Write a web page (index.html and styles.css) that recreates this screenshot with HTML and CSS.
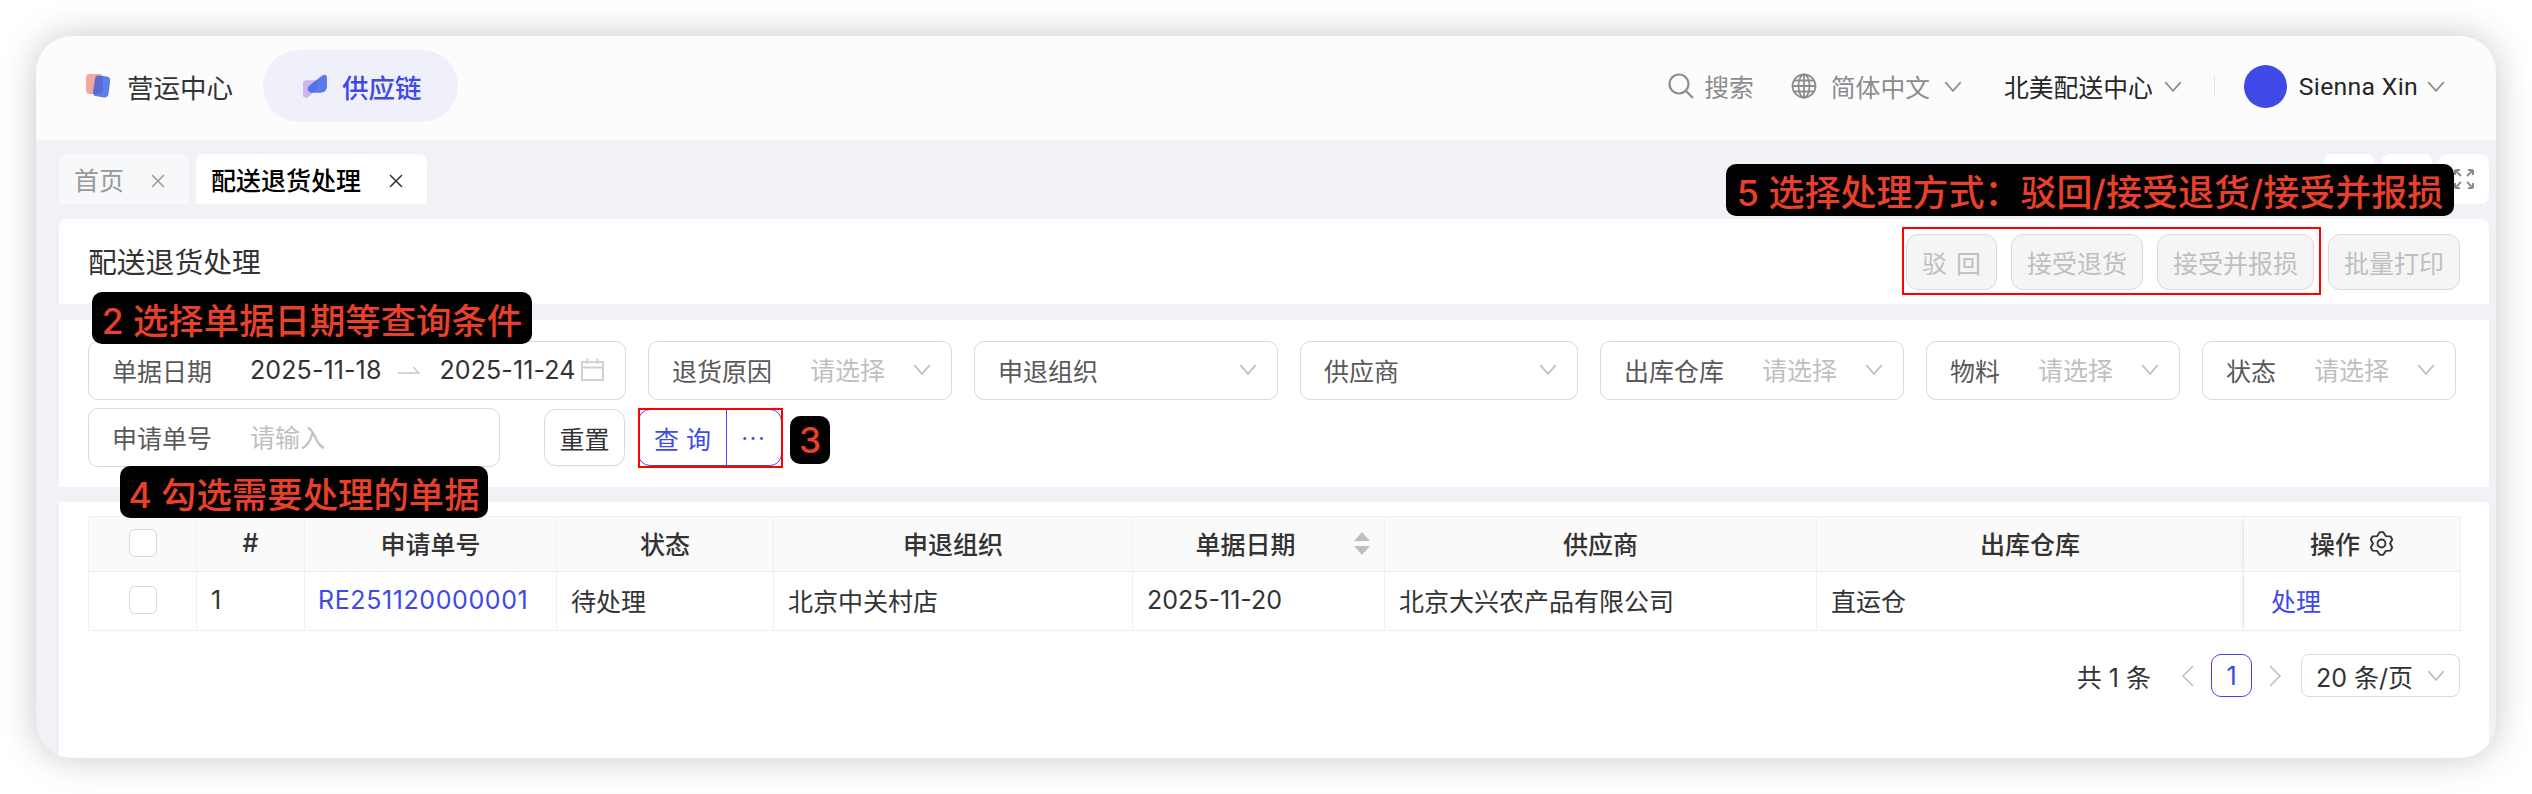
FILE: index.html
```html
<!DOCTYPE html>
<html lang="zh-CN">
<head>
  <meta charset="UTF-8">
  <title>配送退货处理</title>
  <link rel="stylesheet" href="styles.css">
</head>
<body>
  <div class="window">
    <header class="topbar">
      <nav class="apps">
        <a class="app">
          <svg class="app-logo" viewBox="0 0 24 25"><rect width="17" height="20" rx="4" fill="#f4a79d"/><rect x="8" y="2" width="15.5" height="21" rx="4" transform="rotate(8 16 12)" fill="#2f5be6" opacity="0.78"/></svg>
          <span>营运中心</span>
        </a>
        <a class="app app-active">
          <svg class="app-logo" viewBox="0 0 25 25"><path d="M3 6H15V15L5 24Q0 25 0 22V9Q0 6 3 6Z" fill="#cdb6f0"/><path d="M6 12L20 1Q25 -1 25 3V12Q25 19 18 19H8Q3 17 6 12Z" fill="#3b62e6" opacity="0.82"/></svg>
          <span>供应链</span>
        </a>
      </nav>
      <div class="tools">
        <a class="tool tool-search">
          <svg class="tool-icon" viewBox="0 0 26 26" fill="none" stroke="#8c8c8c" stroke-width="2.2"><circle cx="11" cy="11" r="9.5"/><path d="M18 18L25 25"/></svg>
          <span>搜索</span>
        </a>
        <a class="tool tool-lang">
          <svg class="tool-icon" viewBox="0 0 26 26" fill="none" stroke="#8c8c8c" stroke-width="1.8"><circle cx="13" cy="13" r="11.5"/><ellipse cx="13" cy="13" rx="5.5" ry="11.5"/><path d="M13 1.5V24.5M1.5 13H24.5M3 7.5H23M3 18.500H23"/></svg>
          <span>简体中文</span>
          <svg class="chev chev-grey" viewBox="0 0 16 10"><path d="M1 1L8 9L15 1"/></svg>
        </a>
        <a class="tool tool-org">
          <span>北美配送中心</span>
          <svg class="chev chev-grey" viewBox="0 0 16 10"><path d="M1 1L8 9L15 1"/></svg>
        </a>
        <span class="tool-sep"></span>
        <a class="tool tool-user">
          <span class="avatar"></span>
          <span>Sienna Xin</span>
          <svg class="chev chev-grey" viewBox="0 0 16 10"><path d="M1 1L8 9L15 1"/></svg>
        </a>
      </div>
    </header>

    <main class="main">
      <div class="tabbar">
        <div class="tab">
          <span>首页</span>
          <svg class="tab-close" viewBox="0 0 14 14"><path d="M1 1L13 13M13 1L1 13"/></svg>
        </div>
        <div class="tab tab-active">
          <span>配送退货处理</span>
          <svg class="tab-close" viewBox="0 0 14 14"><path d="M1 1L13 13M13 1L1 13"/></svg>
        </div>
        <div class="tab-tools">
          <span class="tab-btn"></span>
          <span class="tab-btn"></span>
          <span class="tab-btn">
            <svg class="full-icon" viewBox="0 0 22 22"><path d="M2 2L8 8M2 2V7M2 2H7M20 2L14 8M20 2V7M20 2H15M2 20L8 14M2 20V15M2 20H7M20 20L14 14M20 20V15M20 20H15"/></svg>
          </span>
        </div>
      </div>

      <section class="card page-head">
        <h1 class="page-title">配送退货处理</h1>
        <div class="head-actions">
          <button class="btn-off">驳 回</button>
          <button class="btn-off">接受退货</button>
          <button class="btn-off">接受并报损</button>
          <button class="btn-off">批量打印</button>
        </div>
      </section>

      <section class="card filters">
        <div class="field w-date">
          <span class="field-label">单据日期</span>
          <span class="date">2025-11-18</span>
          <svg class="range-arrow" viewBox="0 0 22 9"><path d="M0 8H21L15 2"/></svg>
          <span class="date">2025-11-24</span>
          <svg class="cal-icon" viewBox="0 0 23 23"><path d="M1 4H22V22H1ZM1 9.500H22M6.500 0.500V6M16.500 0.500V6"/></svg>
        </div>
        <div class="field w-long">
          <span class="field-label">退货原因</span>
          <span class="placeholder">请选择</span>
          <svg class="chev" viewBox="0 0 16 10"><path d="M1 1L8 9L15 1"/></svg>
        </div>
        <div class="field w-long">
          <span class="field-label">申退组织</span>
          <svg class="chev" viewBox="0 0 16 10"><path d="M1 1L8 9L15 1"/></svg>
        </div>
        <div class="field w-mid">
          <span class="field-label">供应商</span>
          <svg class="chev" viewBox="0 0 16 10"><path d="M1 1L8 9L15 1"/></svg>
        </div>
        <div class="field w-long">
          <span class="field-label">出库仓库</span>
          <span class="placeholder">请选择</span>
          <svg class="chev" viewBox="0 0 16 10"><path d="M1 1L8 9L15 1"/></svg>
        </div>
        <div class="field w-short">
          <span class="field-label">物料</span>
          <span class="placeholder">请选择</span>
          <svg class="chev" viewBox="0 0 16 10"><path d="M1 1L8 9L15 1"/></svg>
        </div>
        <div class="field w-short">
          <span class="field-label">状态</span>
          <span class="placeholder">请选择</span>
          <svg class="chev" viewBox="0 0 16 10"><path d="M1 1L8 9L15 1"/></svg>
        </div>
        <div class="field w-input">
          <span class="field-label">申请单号</span>
          <span class="placeholder">请输入</span>
        </div>
        <div class="query-actions">
          <button class="btn-reset">重置</button>
          <div class="btn-query">
            <span class="btn-query-main">查 询</span>
            <span class="btn-query-more">···</span>
          </div>
        </div>
      </section>

      <section class="card results">
        <table class="grid">
          <colgroup>
            <col class="c-check"><col class="c-no"><col class="c-code"><col class="c-status"><col class="c-org"><col class="c-date"><col class="c-supplier"><col class="c-store"><col class="c-op">
          </colgroup>
          <thead>
            <tr>
              <th><span class="check"></span></th>
              <th>#</th>
              <th>申请单号</th>
              <th>状态</th>
              <th>申退组织</th>
              <th>
                <div class="sort-head">
                  <span>单据日期</span>
                  <svg class="sorter" viewBox="0 0 16 23"><path d="M8 0L16 9H0Z"/><path d="M0 14H16L8 23Z"/></svg>
                </div>
              </th>
              <th>供应商</th>
              <th>出库仓库</th>
              <th class="op-cell">
                <div class="op-head">
                  <span>操作</span>
                  <svg class="gear" viewBox="0 0 24 24"><path d="M10.300 1.100H13.700L16.100 4.900L20.550 5.100L22.270 8.100L20.200 12L22.270 15.900L20.550 18.900L16.100 19.100L13.700 22.900H10.300L7.900 19.100L3.450 18.900L1.730 15.900L3.800 12L1.730 8.100L3.450 5.100L7.900 4.900Z"/><circle cx="12" cy="12" r="3.800"/></svg>
                </div>
              </th>
            </tr>
          </thead>
          <tbody>
            <tr>
              <td class="center"><span class="check"></span></td>
              <td>1</td>
              <td><a class="link link-code">RE251120000001</a></td>
              <td>待处理</td>
              <td>北京中关村店</td>
              <td>2025-11-20</td>
              <td>北京大兴农产品有限公司</td>
              <td>直运仓</td>
              <td class="op-cell op-body"><a class="link">处理</a></td>
            </tr>
          </tbody>
        </table>
        <div class="pager">
          <span class="pager-total">共 1 条</span>
          <svg class="pager-arrow" viewBox="0 0 13 22"><path d="M12 1L2 11L12 21"/></svg>
          <span class="pager-num">1</span>
          <svg class="pager-arrow" viewBox="0 0 13 22"><path d="M1 1L11 11L1 21"/></svg>
          <div class="pager-size">
            <span>20 条/页</span>
            <svg class="chev" viewBox="0 0 16 10"><path d="M1 1L8 9L15 1"/></svg>
          </div>
        </div>
      </section>
    </main>

    <!-- 标注层 -->
    <div class="mark mark-actions"></div>
    <div class="mark mark-query"></div>
    <div class="note note-2">2 选择单据日期等查询条件</div>
    <div class="note note-3">3</div>
    <div class="note note-4">4 勾选需要处理的单据</div>
    <div class="note note-5">5 选择处理方式：驳回/接受退货/接受并报损</div>
  </div>
</body>
</html>
```

FILE: styles.css
```css
* {
  box-sizing: border-box;
}
body {
  margin: 0;
  height: 794px;
  padding: 36px 36px 36px 36px;
  background-color: #fff;
  font-family: Inter, "Noto Sans CJK SC", sans-serif;
  font-size: 25px;
  color: #333;
  overflow: hidden;
}
svg {
  display: block;
  flex: none;
}
button {
  font: inherit;
}

.window {
  position: relative;
  width: 2460px;
  height: 722px;
  border-radius: 36px;
  background-color: #f1f2f6;
  box-shadow: 0 0 36px rgba(0, 0, 0, 0.22);
  overflow: hidden;
  display: flex;
  flex-direction: column;
}

/* 顶部导航 */
.topbar {
  flex: none;
  height: 104px;
  padding: 14px 0 18px 50px;
  background-color: #fcfcfd;
  display: flex;
  justify-content: space-between;
  align-items: center;
}
.apps {
  display: flex;
  align-items: center;
  gap: 30px;
}
.app {
  display: flex;
  align-items: center;
  gap: 17px;
  font-size: 26.500px;
  color: #333;
}
.app-logo {
  width: 24px;
  height: 25px;
}
.app-active {
  height: 72px;
  width: 195px;
  padding-left: 40px;
  gap: 15px;
  border-radius: 36px;
  background-color: #f0f0fb;
  color: #4049e8;
  font-weight: 500;
}
.tools {
  display: flex;
  align-items: center;
  padding-right: 51px;
  font-size: 24.800px;
  color: #8c8c8c;
}
.tool {
  display: flex;
  align-items: center;
}
.tool-icon {
  width: 26px;
  height: 26px;
}
.tool-search {
  gap: 10px;
  margin-right: 37px;
}
.tool-lang {
  gap: 14px;
  margin-right: 42px;
}
.tool-org {
  gap: 11px;
  color: #262626;
}
.tool-sep {
  width: 1px;
  height: 22px;
  margin: 0 29px 0 32px;
  background-color: #e4e4e7;
}
.tool-user {
  font-family: Roboto, "Noto Sans CJK SC", sans-serif;
  color: #262626;
  letter-spacing: 0.3px;
}
.avatar {
  width: 43px;
  height: 43px;
  margin-right: 12px;
  border-radius: 50%;
  background-color: #4049e8;
}
.tool-user .chev {
  margin-left: 9px;
}

.chev {
  width: 18px;
  height: 11px;
  fill: none;
  stroke: #bfbfbf;
  stroke-width: 1.500;
}
.chev-grey {
  stroke: #8c8c8c;
}

/* 主体 */
.main {
  flex: 1;
  min-height: 0;
  padding: 14px 7px 0 23px;
  display: flex;
  flex-direction: column;
  gap: 15px;
}
.tabbar {
  flex: none;
  height: 50px;
  display: flex;
  gap: 7px;
}
.tab {
  display: flex;
  align-items: center;
  padding: 0 24px 0 15px;
  gap: 27px;
  border-radius: 8px 8px 0 0;
  background-color: #f7f8fa;
  color: #999;
}
.tab-close {
  width: 14px;
  height: 14px;
  fill: none;
  stroke: #999;
  stroke-width: 1.500;
  margin-top: 3px;
}
.tab-active {
  gap: 28px;
  background-color: #fff;
  color: #000;
  font-weight: 500;
}
.tab-active .tab-close {
  stroke: #333;
}
.tab-tools {
  margin-left: auto;
  display: flex;
  gap: 7.500px;
}
.tab-btn {
  width: 50px;
  height: 50px;
  border-radius: 8px;
  background-color: #fff;
  display: flex;
  align-items: center;
  justify-content: center;
}
.full-icon {
  width: 22px;
  height: 22px;
  fill: none;
  stroke: #8c8c8c;
  stroke-width: 2;
}
.card {
  background-color: #fff;
}

.page-head {
  flex: none;
  height: 85px;
  margin-bottom: 1px;
  padding: 0 29px;
  border-radius: 8px 8px 0 0;
  display: flex;
  justify-content: space-between;
  align-items: center;
}
.page-title {
  margin: 0 0 2px;
  font-size: 28.800px;
  font-weight: 400;
  color: #333;
}
.head-actions {
  display: flex;
  gap: 14px;
}
.btn-off {
  height: 56px;
  padding: 0 15px;
  border: 1px solid #d9d9d9;
  border-radius: 12px;
  background-color: #f5f5f5;
  color: #bfbfbf;
  word-spacing: 2px;
}

/* 查询条件 */
.filters {
  flex: none;
  height: 167px;
  padding: 21px 33px 0 29px;
  display: flex;
  flex-wrap: wrap;
  align-content: flex-start;
  gap: 8px 22px;
}
.field {
  height: 59px;
  padding: 0 20px 2px 23px;
  border: 1px solid #d9d9d9;
  border-radius: 10px;
  display: flex;
  align-items: center;
}
.w-date {
  width: 538px;
}
.w-long {
  width: 304px;
}
.w-mid {
  width: 278px;
}
.w-short {
  width: 254px;
}
.w-input {
  width: 412px;
}
.field-label {
  color: #595959;
  margin-right: 38px;
}
.field .chev {
  margin-left: auto;
}
.placeholder {
  color: #bfbfbf;
  margin-bottom: 2px;
}
.date {
  color: #333;
  letter-spacing: 0.1px;
}
.range-arrow {
  width: 22px;
  height: 9px;
  margin: 0 19px 0 17px;
  fill: none;
  stroke: #c8c8c8;
  stroke-width: 1.500;
}
.cal-icon {
  width: 23px;
  height: 23px;
  margin-left: 6px;
  fill: none;
  stroke: #d0d0d0;
  stroke-width: 2;
}
.query-actions {
  margin-left: 22px;
  display: flex;
  align-items: center;
  gap: 13px;
  height: 59px;
}
.btn-reset {
  width: 81px;
  height: 57px;
  padding: 0;
  border: 1px solid #d9d9d9;
  border-radius: 12px;
  background-color: #fff;
  color: #333;
  box-shadow: 0 2px 2px rgba(0, 0, 0, 0.03);
}
.btn-query {
  width: 144px;
  height: 57px;
  border: 1px solid #4049e8;
  border-radius: 12px;
  color: #4049e8;
  display: flex;
  align-items: center;
}
.btn-query-main {
  width: 88px;
  height: 100%;
  border-right: 1px solid #4049e8;
  display: flex;
  align-items: center;
  justify-content: center;
}
.btn-query-more {
  flex: 1;
  text-align: center;
  font-size: 22px;
  letter-spacing: 2px;
}

/* 列表 */
.results {
  flex: 1;
  padding: 14px 29px 0 29px;
}
.grid {
  width: 2372px;
  table-layout: fixed;
  border-collapse: separate;
  border-spacing: 0;
  border-top: 1px solid #f0f0f0;
  border-left: 1px solid #f0f0f0;
}
.c-check, .c-no {
  width: 108px;
}
.c-code {
  width: 252px;
}
.c-status {
  width: 217px;
}
.c-org {
  width: 359px;
}
.c-date {
  width: 252px;
}
.c-supplier {
  width: 432px;
}
.c-store {
  width: 427px;
}
.c-op {
  width: 217px;
}
.grid th, .grid td {
  padding: 0 14px 2px;
  border-right: 1px solid #f0f0f0;
  border-bottom: 1px solid #ececec;
}
.grid th {
  height: 55px;
  background-color: #fafafa;
  font-weight: 500;
  text-align: center;
  color: #333;
}
.grid td {
  height: 59px;
  color: #333;
}
.grid .center {
  text-align: center;
}
.check {
  display: block;
  width: 28px;
  height: 28px;
  margin: 0 auto;
  border: 1px solid #d9d9d9;
  border-radius: 6px;
  background-color: #fff;
}
.link {
  color: #4049e8;
}
.link-code {
  margin-left: -1px;
  letter-spacing: 0.6px;
}
.sort-head {
  display: flex;
  align-items: center;
}
.sort-head span {
  flex: 1;
}
.sorter {
  width: 16px;
  height: 23px;
  margin-left: 10px;
  fill: #bfbfbf;
}
.op-cell {
  box-shadow: -5px 0 6px -4px rgba(0, 0, 0, 0.08);
}
.grid .op-body {
  padding-left: 27px;
}
.op-head {
  display: flex;
  align-items: center;
  justify-content: center;
  gap: 9px;
}
.gear {
  width: 25px;
  height: 25px;
  fill: none;
  stroke: #333;
  stroke-width: 1.800;
  stroke-linejoin: round;
}

.pager {
  margin-top: 23px;
  display: flex;
  justify-content: flex-end;
  align-items: center;
}
.pager-total {
  margin-right: 30px;
}
.pager-arrow {
  width: 13px;
  height: 22px;
  fill: none;
  stroke: #bfbfbf;
  stroke-width: 1.500;
}
.pager-num {
  width: 41px;
  height: 43px;
  margin: 0 17px;
  border: 1px solid #4049e8;
  border-radius: 10px;
  color: #4049e8;
  display: flex;
  align-items: center;
  justify-content: center;
}
.pager-size {
  width: 159px;
  height: 43px;
  margin-left: 19px;
  padding: 0 14px;
  border: 1px solid #d9d9d9;
  border-radius: 8px;
  display: flex;
  align-items: center;
  justify-content: space-between;
}

/* 标注层 */
.mark {
  position: absolute;
  border: 2px solid #f00;
}
.mark-actions {
  left: 1866px;
  top: 191px;
  width: 419px;
  height: 68px;
}
.mark-query {
  left: 602px;
  top: 372px;
  width: 145px;
  height: 60px;
}
.note {
  position: absolute;
  height: 52px;
  border-radius: 10px;
  background-color: #000;
  color: #e8402a;
  font-size: 35.400px;
  font-weight: 500;
  display: flex;
  align-items: center;
  justify-content: center;
  white-space: nowrap;
}
.note-2 {
  left: 56px;
  top: 256px;
  width: 440px;
}
.note-3 {
  left: 754px;
  top: 380px;
  width: 40px;
  height: 48px;
}
.note-4 {
  left: 84px;
  top: 430px;
  width: 368px;
}
.note-5 {
  left: 1690px;
  top: 128px;
  width: 728px;
  font-size: 36px;
}
```
